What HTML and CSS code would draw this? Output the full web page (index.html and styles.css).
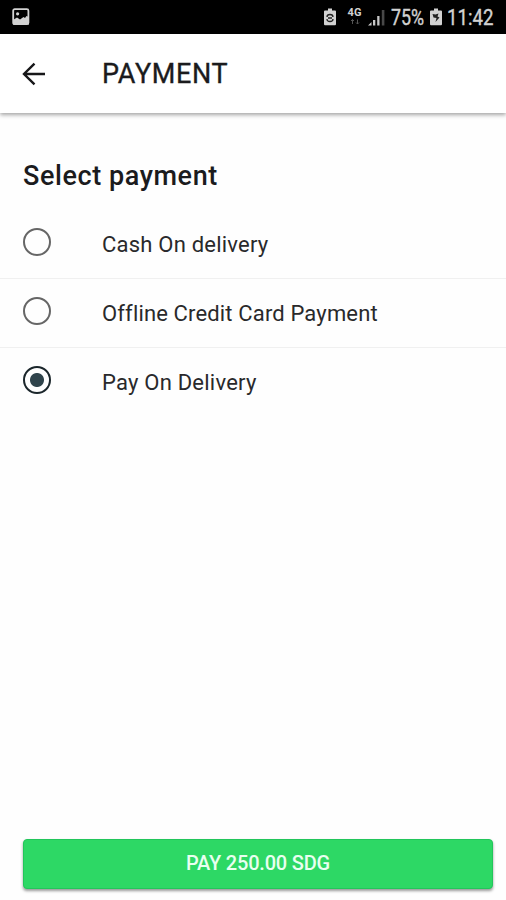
FILE: index.html
```html
<!DOCTYPE html>
<html lang="en">
<head>
<meta charset="utf-8">
<title>Payment</title>
<link rel="stylesheet" href="styles.css">
</head>
<body>
<div class="screen">
  <div class="status">
    <svg class="photo" width="18" height="18" viewBox="0 0 18 18"><rect x="1.200" y="1.200" width="15.200" height="15" rx="1.500" fill="none" stroke="#d2d2d2" stroke-width="1.800"/><circle cx="5.600" cy="5.800" r="1.600" fill="#d2d2d2"/><path d="M1 12l4-2.500 3 2L11.500 9l1.500 1 1.500-2L17 9v7.500H1z" fill="#d2d2d2"/></svg>
    <svg class="saver" width="12" height="18" viewBox="0 0 12 18"><path d="M1 2.500h3V.5h4v2h3q1 0 1 1V16q0 1.200-1 1.200H1Q0 17.200 0 16V3.500q0-1 1-1z" fill="#d2d2d2"/><path d="M3 9Q3 6.500 6 6.500T9 9M9 11Q9 13.500 6 13.500T3 11M4 10h4" fill="none" stroke="#222" stroke-width="1.300"/></svg>
    <div class="network"><span>4G</span><svg width="10" height="6" viewBox="0 0 10 6"><path d="M2.500 5V.5M1 2l1.500-1.500L4 2M7.500.5V5M6 3.500L7.500 5 9 3.500" fill="none" stroke="#555" stroke-width="1"/></svg></div>
    <svg class="signal" width="18" height="17" viewBox="0 0 18 17"><path d="M0 16.500L3.500 13v3.500zM5 11h2.300v5.500H5zM9.200 7h2.300v9.500H9.200z" fill="#c8c8c8"/><path d="M13.800 1h2.600v15.500h-2.600z" fill="#484848"/></svg>
    <span class="percent">75%</span>
    <svg class="battery" width="12" height="18" viewBox="0 0 12 18"><path d="M1 2.500h3V.5h4v2h3q1 0 1 1V16q0 1.200-1 1.200H1Q0 17.200 0 16V3.500q0-1 1-1z" fill="#d2d2d2"/><path d="M2.500 6l3 .5L8.500 5.500l-1 3 2 1-4 4.500 1-4-3-.5z" fill="#222"/></svg>
    <span class="clock">11:42</span>
  </div>
  <header class="appbar">
    <svg width="24" height="24" viewBox="0 0 24 24"><path d="M23 12H2M12.500 1.700L2 12l10.500 10.300" fill="none" stroke="#171719" stroke-width="2.400"/></svg>
    <h1>PAYMENT</h1>
  </header>
  <main>
    <h2>Select payment</h2>
    <ul>
      <li><i class="radio"></i><span>Cash On delivery</span></li>
      <li><i class="radio"></i><span class="card">Offline Credit Card Payment</span></li>
      <li><i class="radio checked"></i><span>Pay On Delivery</span></li>
    </ul>
  </main>
  <button class="pay">PAY 250.00 SDG</button>
</div>
</body>
</html>
```
FILE: styles.css
```css
* { box-sizing: border-box; }
body { margin: 0; background: #fefefe; font-family: Roboto, sans-serif; color: #1b1b1d; }
.screen { height: 900px; display: flex; flex-direction: column; overflow: hidden; }
.status { height: 34px; flex: none; background: #000; color: #d2d2d2; display: flex; align-items: center; padding: 0 12px; white-space: nowrap; }
.status svg { flex: none; }
.photo { margin-right: auto; }
.saver { margin-right: 11px; }
.network { width: 15px; height: 18px; display: flex; flex-direction: column; align-items: center; gap: 2px; margin-right: 6px; font-size: 11px; font-weight: 700; line-height: 9px; }
.signal { margin-right: 5px; }
.percent { width: 34px; margin-right: 5px; font-size: 22px; transform: scaleX(.81); transform-origin: left; }
.battery { margin-right: 5px; }
.clock { width: 47px; font-size: 22px; transform: scaleX(.85); transform-origin: left; }
.percent, .clock { margin-top: 1px; -webkit-text-stroke: .4px; }
.appbar { height: 79px; flex: none; display: flex; align-items: center; padding: 0 22px; background: #fff; box-shadow: 0 2px 4px rgba(0,0,0,.35); }
h1 { margin: 1px 0 0 56px; font-size: 27px; font-weight: 400; -webkit-text-stroke: .35px; line-height: 32px; letter-spacing: .65px; }
main { flex: 1; padding-top: 47px; }
h2 { margin: 0 0 0 23px; font-size: 27px; font-weight: 500; line-height: 32px; letter-spacing: .58px; }
ul { list-style: none; margin: 18px 0 0; padding: 0; }
li { height: 69px; display: flex; align-items: center; padding-left: 23px; border-bottom: 1px solid #f0f0f0; font-size: 22px; letter-spacing: .22px; color: #29292b; }
li:last-child { border-color: transparent; }
li span { margin-left: 51px; }
li .card { letter-spacing: .15px; }
.radio { width: 28px; height: 28px; flex: none; margin-bottom: 4px; border: 2.500px solid #666; border-radius: 50%; }
.radio.checked { border-color: #1b262b; background: radial-gradient(circle, #2f434b 6.500px, transparent 7.500px); }
.pay { margin: 0 13px 11px 23px; height: 50px; flex: none; border: 1px solid #22c65b; border-radius: 4px; background: #2dd865; box-shadow: 0 2px 3px rgba(0,0,0,.4); color: #e8fff0; font: 500 20px/24px Roboto, sans-serif; letter-spacing: -.2px; padding: 0 0 2px; }
```
